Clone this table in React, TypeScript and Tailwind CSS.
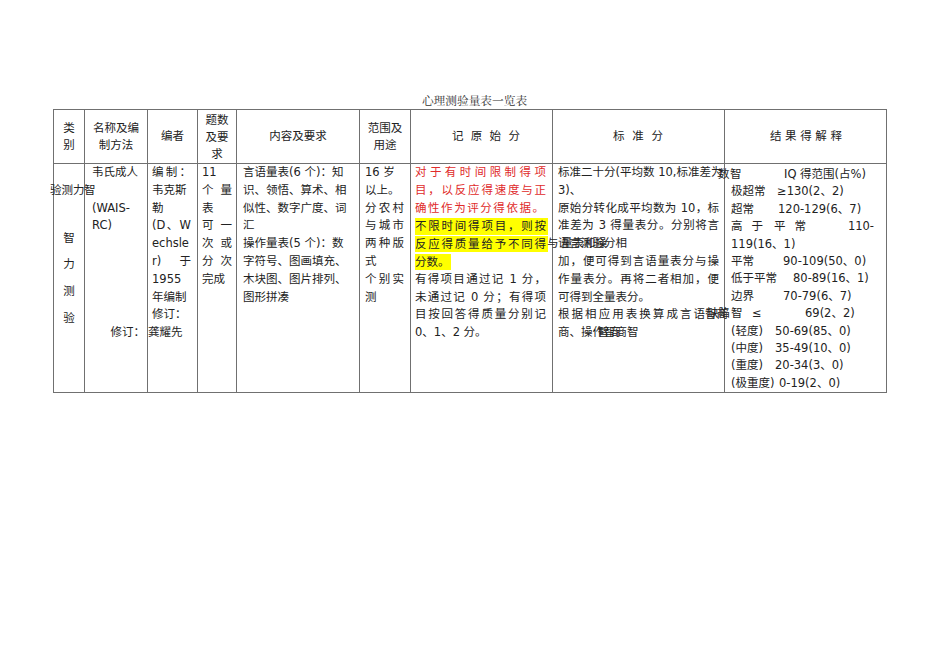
import React from "react";

const J = ({ children, className = "" }: { children: React.ReactNode; className?: string }) => (
  <div className={`h-[17.8px] text-justify [text-align-last:justify] ${className}`}>{children}</div>
);
const L = ({ children, className = "" }: { children?: React.ReactNode; className?: string }) => (
  <div className={`h-[17.8px] whitespace-nowrap ${className}`}>{children}</div>
);
const R = ({ children, className = "" }: { children?: React.ReactNode; className?: string }) => (
  <div className={`h-[17.4px] flex whitespace-nowrap ${className}`}>{children}</div>
);

export default function App() {
  const head = "border-r border-b border-[#707070] flex items-center leading-[17px]";
  const cell = "border-r border-b border-[#707070] leading-[17.8px] relative flex flex-col";
  return (
    <div className="w-[950px] h-[672px] bg-white font-['DejaVu_Sans','Noto_Sans_CJK_SC',sans-serif] text-[11.5px] text-[#222]">
      <div className="pt-[92px] pl-[53px]">
        <div className="w-[834px] h-[17px] leading-[17px] pl-[9px] text-center font-['Noto_Serif_CJK_SC','Noto_Sans_CJK_SC',serif] text-[11.7px] text-[#333]">
          心理测验量表一览表
        </div>
        <div className="grid w-[834px] grid-cols-[31px_63px_50px_39px_123px_51px_142px_172px_162px] grid-rows-[54px_229px] border-t border-l border-[#707070]">
          {/* header row */}
          <div className={`${head} justify-center text-center`}>类<br />别</div>
          <div className={`${head} justify-center text-center`}>名称及编<br />制方法</div>
          <div className={`${head} justify-center text-center`}>编者</div>
          <div className={`${head} justify-center text-center leading-[15px] pt-[1px]`}>题数<br />及要<br />求</div>
          <div className={`${head} justify-center text-center`}>内容及要求</div>
          <div className={`${head} justify-center text-center`}>范围及<br />用途</div>
          <div className={`${head} pl-[41px] tracking-[7.3px]`}>记原始分</div>
          <div className={`${head} pl-[60px] tracking-[7.75px]`}>标准分</div>
          <div className={`${head} pl-[45px] tracking-[3.6px]`}>结果得解释</div>

          {/* body row */}
          {/* col 1 */}
          <div className={cell}>
            <L />
            <L className="ml-[-4px]">验测力</L>
            <div className="mt-[25px] flex flex-col items-center leading-[26.7px]">
              <div>智</div>
              <div>力</div>
              <div>测</div>
              <div>验</div>
            </div>
          </div>
          {/* col 2 */}
          <div className={`${cell} pl-[7px] pr-[2px]`}>
            <L>韦氏成人</L>
            <L className="ml-[-8px]">智</L>
            <L>(WAIS-</L>
            <L>RC)</L>
            <L />
            <L />
            <L />
            <L />
            <L />
            <L className="text-right">修订：</L>
          </div>
          {/* col 3 */}
          <div className={`${cell} pl-[4px] pr-[6px]`}>
            <J>编制：</J>
            <L>韦克斯</L>
            <L>勒</L>
            <J>(D、W</J>
            <L>echsle</L>
            <J>r) 于</J>
            <L>1955</L>
            <L>年编制</L>
            <L>修订：</L>
            <L className="ml-[-4px]">龚耀先</L>
          </div>
          {/* col 4 */}
          <div className={`${cell} pl-[4px] pr-[4px]`}>
            <L>11</L>
            <J>个 量</J>
            <L>表</L>
            <J>可 一</J>
            <J>次 或</J>
            <J>分 次</J>
            <L>完成</L>
          </div>
          {/* col 5 */}
          <div className={`${cell} pl-[6px]`}>
            <L>言语量表(6 个)：知</L>
            <L>识、领悟、算术、相</L>
            <L>似性、数字广度、词</L>
            <L>汇</L>
            <L>操作量表(5 个)：数</L>
            <L>字符号、图画填充、</L>
            <L>木块图、图片排列、</L>
            <L>图形拼凑</L>
          </div>
          {/* col 6 */}
          <div className={`${cell} pl-[5px] pr-[6px]`}>
            <L>16 岁</L>
            <L>以上。</L>
            <J>分农村</J>
            <J>与城市</J>
            <J>两种版</J>
            <L>式</L>
            <J>个别实</J>
            <L>测</L>
          </div>
          {/* col 7 */}
          <div className={`${cell} pl-[4px] pr-[6px]`}>
            <J className="text-[#e02b2b]">对于有时间限制得项</J>
            <J className="text-[#e02b2b]">目，以反应得速度与正</J>
            <J className="text-[#e02b2b] pr-[2px]">确性作为评分得依据。</J>
            <div className="h-[17.8px] flex items-center mr-[-2px]">
              <div className="w-full h-[16.5px] bg-[#ffff00] pr-[2px] leading-[16.5px] text-justify [text-align-last:justify]">不限时间得项目，则按</div>
            </div>
            <div className="h-[17.8px] relative flex items-center mr-[-2px]">
              <div className="w-full h-[16.5px] bg-[#ffff00] pr-[2px] leading-[16.5px] text-justify [text-align-last:justify]">反应得质量给予不同得</div>
              <span className="absolute left-[132px] top-0 leading-[17.8px]">与</span>
            </div>
            <div className="h-[17.8px] flex items-center">
              <span className="h-[16.5px] bg-[#ffff00] leading-[16.5px] pr-[1px]">分数。</span>
            </div>
            <J>有得项目通过记 1 分，</J>
            <J>未通过记 0 分；有得项</J>
            <J>目按回答得质量分别记</J>
            <L>0、1、2 分。</L>
          </div>
          {/* col 8 */}
          <div className={`${cell} pl-[5px] pr-[5px]`}>
            <L>标准二十分(平均数 10,标准差为</L>
            <L>3)、</L>
            <J>原始分转化成平均数为 10，标</J>
            <J>准差为 3 得量表分。分别将言</J>
            <L className="flex">
              <span className="relative">
                语言测验
                <span className="absolute left-[3px] top-0">量表和操</span>
              </span>
              <span>分相</span>
            </L>
            <J>加，便可得到言语量表分与操</J>
            <J>作量表分。再将二者相加，便</J>
            <L>可得到全量表分。</L>
            <L className="flex">
              <span className="w-[147px] shrink-0 text-justify [text-align-last:justify]">根据相应用表换算成言语</span>
              <span>智商</span>
            </L>
            <L className="flex">
              <span>商、操</span>
              <span className="relative">
                作智商智
                <span className="absolute left-[5px] top-0">智商</span>
              </span>
            </L>
          </div>
          {/* col 9 */}
          <div className="border-r border-b border-[#707070] relative flex flex-col pl-[6px] pr-[12px] pt-[2px] leading-[17.4px]">
            <R className="relative">
              <span className="absolute left-[-13px] top-0">数</span>
              <span className="w-[54px] shrink-0 ml-[-1px]">智</span>
              <span>IQ 得范围(占%)</span>
            </R>
            <R><span className="w-[46px] shrink-0">极超常</span><span>≥130(2、2)</span></R>
            <R><span className="w-[47px] shrink-0">超常</span><span>120-129(6、7)</span></R>
            <R>
              <span>高</span>
              <span className="ml-[9px]">于</span>
              <span className="ml-[11px]">平</span>
              <span className="ml-[9px]">常</span>
              <span className="ml-auto">110-</span>
            </R>
            <R>119(16、1)</R>
            <R><span className="w-[52px] shrink-0">平常</span><span>90-109(50、0)</span></R>
            <R><span className="w-[62px] shrink-0">低于平常</span><span>80-89(16、1)</span></R>
            <R><span className="w-[52px] shrink-0">边界</span><span>70-79(6、7)</span></R>
            <R className="relative">
              <span className="absolute left-[-24px] top-0">缺陷</span>
              <span className="w-[21px] shrink-0">智</span>
              <span className="w-[53px] shrink-0">≤</span>
              <span>69(2、2)</span>
            </R>
            <R><span className="w-[44px] shrink-0">(轻度)</span><span>50-69(85、0)</span></R>
            <R><span className="w-[44px] shrink-0">(中度)</span><span>35-49(10、0)</span></R>
            <R><span className="w-[44px] shrink-0">(重度)</span><span>20-34(3、0)</span></R>
            <R><span className="w-[48px] shrink-0">(极重度)</span><span>0-19(2、0)</span></R>
          </div>
        </div>
      </div>
    </div>
  );
}
